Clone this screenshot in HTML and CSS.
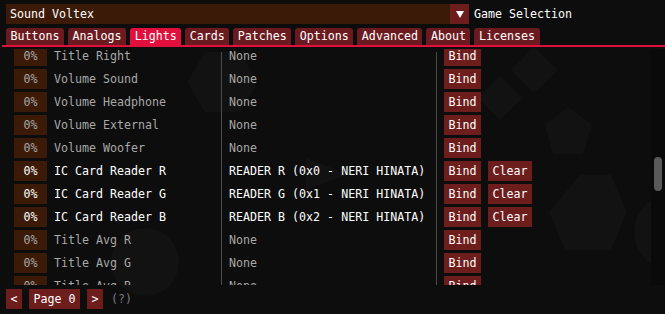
FILE: index.html
```html
<!DOCTYPE html>
<html lang="en">
<head>
	<meta charset="UTF-8">
	<title>Lights</title>
	<link rel="stylesheet" href="styles.css">
</head>
<body>

<div class="backdrop">
	<svg width="665" height="314" viewBox="0 0 665 314">
		<polygon points="205,52 240,52 258,82 240,112 205,112 187,82" />
		<polygon points="534,47 558,70 534,93 511,70" />
		<polygon points="500,76 522,98 500,120 478,98" />
		<polygon points="568,107 592,125 583,154 553,154 545,125" />
		<polygon points="580,175 611,175 627,212 611,250 565,250 549,212" />
		<polygon points="306,158 348,174 306,190" />
		<circle cx="145" cy="262" r="34" />
		<circle cx="672" cy="232" r="38" />
	</svg>
</div>

<div class="window">
	<div class="combo_row">
		<div class="combo">Sound Voltex</div>
		<div class="combo_arrow">
			<svg width="8" height="7" viewBox="0 0 8 7"><polygon points="0,0 8,0 4,7" fill="#fff"/></svg>
		</div>
		<span class="combo_label">Game Selection</span>
	</div>

	<ul class="tabs">
		<li>Buttons</li>
		<li>Analogs</li>
		<li class="active">Lights</li>
		<li>Cards</li>
		<li>Patches</li>
		<li>Options</li>
		<li>Advanced</li>
		<li>About</li>
		<li>Licenses</li>
	</ul>
	<div class="tab_line"></div>

	<div class="scroll">
		<div class="list">
			<div class="row dim">
				<div class="name_col"><span class="meter">0%</span>Title Right</div>
				<div class="dev_col">None</div>
				<div class="act_col"><span class="btn">Bind</span></div>
			</div>
			<div class="row dim">
				<div class="name_col"><span class="meter">0%</span>Volume Sound</div>
				<div class="dev_col">None</div>
				<div class="act_col"><span class="btn">Bind</span></div>
			</div>
			<div class="row dim">
				<div class="name_col"><span class="meter">0%</span>Volume Headphone</div>
				<div class="dev_col">None</div>
				<div class="act_col"><span class="btn">Bind</span></div>
			</div>
			<div class="row dim">
				<div class="name_col"><span class="meter">0%</span>Volume External</div>
				<div class="dev_col">None</div>
				<div class="act_col"><span class="btn">Bind</span></div>
			</div>
			<div class="row dim">
				<div class="name_col"><span class="meter">0%</span>Volume Woofer</div>
				<div class="dev_col">None</div>
				<div class="act_col"><span class="btn">Bind</span></div>
			</div>
			<div class="row">
				<div class="name_col"><span class="meter">0%</span>IC Card Reader R</div>
				<div class="dev_col">READER R (0x0 - NERI HINATA)</div>
				<div class="act_col"><span class="btn">Bind</span><span class="btn">Clear</span></div>
			</div>
			<div class="row">
				<div class="name_col"><span class="meter">0%</span>IC Card Reader G</div>
				<div class="dev_col">READER G (0x1 - NERI HINATA)</div>
				<div class="act_col"><span class="btn">Bind</span><span class="btn">Clear</span></div>
			</div>
			<div class="row">
				<div class="name_col"><span class="meter">0%</span>IC Card Reader B</div>
				<div class="dev_col">READER B (0x2 - NERI HINATA)</div>
				<div class="act_col"><span class="btn">Bind</span><span class="btn">Clear</span></div>
			</div>
			<div class="row dim">
				<div class="name_col"><span class="meter">0%</span>Title Avg R</div>
				<div class="dev_col">None</div>
				<div class="act_col"><span class="btn">Bind</span></div>
			</div>
			<div class="row dim">
				<div class="name_col"><span class="meter">0%</span>Title Avg G</div>
				<div class="dev_col">None</div>
				<div class="act_col"><span class="btn">Bind</span></div>
			</div>
			<div class="row dim">
				<div class="name_col"><span class="meter">0%</span>Title Avg B</div>
				<div class="dev_col">None</div>
				<div class="act_col"><span class="btn">Bind</span></div>
			</div>
		</div>
		<div class="scrollbar"><div class="thumb"></div></div>
	</div>

	<div class="pager">
		<span class="btn">&lt;</span>
		<span class="btn">Page 0</span>
		<span class="btn">&gt;</span>
		<span class="hint">(?)</span>
	</div>
</div>

</body>
</html>
```

FILE: styles.css
```css
*{
	margin: 0;
	padding: 0;
	box-sizing: border-box;
}
li{
	list-style: none;
}
body{
	width: 665px;
	height: 314px;
	overflow: hidden;
	background: #0d0d0d;
	color: #fff;
	font-family: "DejaVu Sans Mono", "Liberation Mono", monospace;
	font-size: 11.65px;
	line-height: 14px;
	position: relative;
}

/* faint shapes behind the window */
.backdrop{
	position: absolute;
	left: 0;
	top: 0;
}
.backdrop svg{
	display: block;
	fill: #121212;
}

.window{
	position: relative;
	height: 100%;
}

/* game selection */
.combo_row{
	display: flex;
	align-items: center;
	padding: 4px 0 0 6px;
	height: 24px;
}
.combo{
	width: 444px;
	height: 20px;
	line-height: 20px;
	padding-left: 4px;
	background: #3b1a08;
}
.combo_arrow{
	width: 19px;
	height: 20px;
	background: #6e1d1d;
	display: flex;
	align-items: center;
	justify-content: center;
}
.combo_arrow svg{
	display: block;
}
.combo_label{
	margin-left: 5px;
}

/* tabs */
.tabs{
	display: flex;
	gap: 4px;
	margin-top: 4px;
	padding-left: 6px;
	height: 17px;
}
.tabs li{
	height: 17px;
	line-height: 17px;
	padding: 0 4.5px;
	background: #6b1b1f;
	border-radius: 3px 3px 0 0;
}
.tabs .active{
	background: #e00f3b;
}
.tab_line{
	height: 2px;
	margin-left: 2px;
	background: #e00f3b;
}

/* light list */
.scroll{
	display: flex;
	margin-top: 2px;
	height: 236px;
}
.list{
	flex: 1;
	overflow: hidden;
	padding-left: 14px;
}
.list .row:first-child{
	margin-top: -4px;
}
.list .row:first-child .dev_col,
.list .row:first-child .act_col{
	border-image: linear-gradient(transparent 7px, #4c4c4c 7px) 1;
}
.row{
	display: grid;
	grid-template-columns: 207px 215px auto;
	height: 23px;
}
.row > div{
	display: flex;
	align-items: center;
	padding: 1px 0 2px;
}
.dev_col,
.act_col{
	border-left: 1px solid #4c4c4c;
	padding-left: 7px !important;
}
.act_col{
	gap: 7px;
}
.meter{
	width: 33px;
	height: 20px;
	line-height: 20px;
	text-align: center;
	background: #3b1a08;
	margin-right: 7px;
}
.dim .name_col,
.dim .dev_col{
	color: #a8a8a8;
}
.btn{
	display: inline-block;
	height: 20px;
	line-height: 20px;
	padding: 0 4.5px;
	background: #6e1d1d;
	color: #fff;
}

.scrollbar{
	width: 14px;
	background: #0a0a0a;
	padding: 108px 3px 0;
}
.thumb{
	height: 34px;
	border-radius: 4px;
	background: #595959;
}

/* paging */
.pager{
	display: flex;
	align-items: center;
	gap: 7px;
	margin-top: 4px;
	padding-left: 6px;
}
.hint{
	margin-left: 1px;
	color: #7a7a7a;
}
```
